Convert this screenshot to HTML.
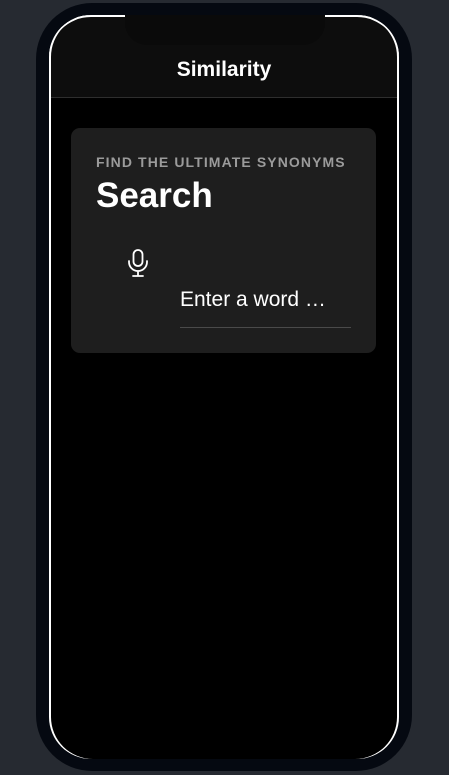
<!DOCTYPE html>
<html><head><style>
body{margin:0;width:449px;height:775px;background:#262a31;position:relative;overflow:hidden;font-family:"Liberation Sans",sans-serif}
.phone{position:absolute;left:36px;top:3px;width:376px;height:768px;background:#050911;border-radius:56px}
.screen{position:absolute;left:49px;top:15px;width:350px;height:744px;background:#000;border-radius:42px;overflow:hidden}
.rim{position:absolute;left:49px;top:15px;width:350px;height:744px;border-radius:42px;box-shadow:inset 2px 0 0 #fff,inset -2px 0 0 #fff,inset 0 2px 0 #fff;pointer-events:none}
.top{position:absolute;left:0;top:0;width:350px;height:82px;background:#0d0d0d;border-bottom:1px solid #2e2e2e}
.notch{position:absolute;left:76px;top:0;width:200px;height:30px;background:#0a0a0a;border-radius:0 0 22px 22px}
.title{position:absolute;left:0;width:350px;top:43px;text-align:center;color:#fff;font-weight:bold;font-size:21px}
.card{position:absolute;left:71px;top:128px;width:305px;height:225px;background:#1e1e1e;border-radius:9px}
.lbl{position:absolute;left:25px;top:26px;color:#9b9b9b;font-weight:bold;font-size:14px;letter-spacing:1.1px}
.h{position:absolute;left:25px;top:48px;color:#fff;font-weight:bold;font-size:35px}
.inp{position:absolute;left:109px;top:160px;color:#fff;font-size:21px}
.line{position:absolute;left:109px;top:199px;width:171px;height:1px;background:#4a4a4a}
</style></head><body>
<div class="phone"></div>
<div class="screen">
<div class="top"><div class="notch"></div><div class="title">Similarity</div></div>
</div>
<div class="rim"></div>
<div style="position:absolute;left:125px;top:15px;width:200px;height:3px;background:#0a0a0a"></div>
<div class="card">
<div class="lbl">FIND THE ULTIMATE SYNONYMS</div>
<div class="h">Search</div>
<svg style="position:absolute;left:55px;top:120px" width="24" height="30" viewBox="0 0 24 30" fill="none" stroke="#fff" stroke-width="1.8" stroke-linecap="round"><rect x="7.5" y="2" width="9" height="16" rx="4.5"/><path d="M3 13v1a9 9 0 0 0 18 0v-1M12 23v5M7 28h10"/></svg>
<div class="inp">Enter a word …</div>
<div class="line"></div>
</div>
</body></html>
